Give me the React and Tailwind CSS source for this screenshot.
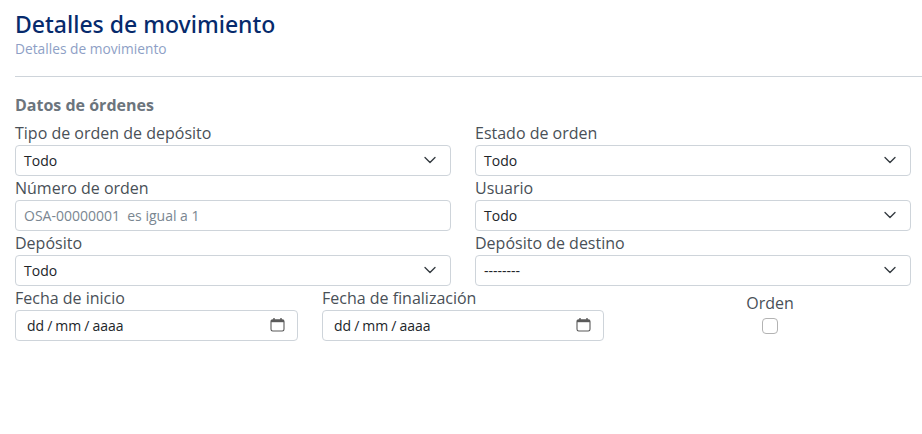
import { ChevronDown } from 'lucide-react'

const boxClass = 'h-[31px] w-full rounded-[4px] border border-[#ced4da] bg-white text-[14px] leading-[29px]'

function Label({ children }) {
  return <div className="h-[24px] text-[16px] leading-[24px] text-[#495057]">{children}</div>
}

function SelectField({ label, value }) {
  return (
    <div>
      <Label>{label}</Label>
      <div className={`${boxClass} flex items-center justify-between pl-2 pr-[10px] text-[#212529]`}>
        <span>{value}</span>
        <ChevronDown size={20} strokeWidth={1.6} className="mb-[1px] text-[#343a40]" />
      </div>
    </div>
  )
}

function DateField({ label }) {
  return (
    <div>
      <Label>{label}</Label>
      <div className={`${boxClass} flex items-center justify-between pl-[11px] pr-[12px] text-[#212529]`}>
        <span className="[word-spacing:-0.6px]">dd / mm / aaaa</span>
        <svg width="15" height="15" viewBox="0 0 15 15" fill="none" className="mb-[3px]">
          <path d="M1 4.5C1 3.4 1.7 2.8 2.7 2.8H12.3C13.3 2.8 14 3.4 14 4.5V12.3C14 13.3 13.3 14 12.3 14H2.7C1.7 14 1 13.3 1 12.3V4.5Z" stroke="#5a5a5a" strokeWidth="1.1" />
          <rect x="1" y="3" width="13" height="2.2" fill="#5a5a5a" />
          <path d="M4 1V3M11 1V3" stroke="#5a5a5a" strokeWidth="1.4" />
        </svg>
      </div>
    </div>
  )
}

export default function App() {
  return (
    <div className="min-h-[434px] bg-white font-['Open_Sans',sans-serif]">
      {/* Header */}
      <div className="pl-[15px] pt-[9px]">
        <h1 className="font-['Noto_Sans',sans-serif] text-[23px] font-medium leading-[30px] text-[#062a6c]">
          Detalles de movimiento
        </h1>
        <p className="mt-[1px] text-[13.75px] font-medium leading-[18px] text-[#8e9fc6]">Detalles de movimiento</p>
      </div>
      <hr className="ml-[15px] mt-[18px] border-t border-[#ced4da]" />

      {/* Form */}
      <div className="pl-[15px] pr-[11px] pt-[16px]">
        <h2 className="text-[16px] font-bold leading-[24px] text-[#6c757d]">Datos de órdenes</h2>
        <div className="mt-[4px] grid grid-cols-2 gap-x-[24px]">
          <SelectField label="Tipo de orden de depósito" value="Todo" />
          <SelectField label="Estado de orden" value="Todo" />
        </div>
        <div className="grid grid-cols-2 gap-x-[24px]">
          <div>
            <Label>Número de orden</Label>
            <input
              className={`${boxClass} block px-2 outline-none placeholder:text-[#7a8691]`}
              placeholder="OSA-00000001  es igual a 1"
            />
          </div>
          <SelectField label="Usuario" value="Todo" />
        </div>
        <div className="grid grid-cols-2 gap-x-[24px]">
          <SelectField label="Depósito" value="Todo" />
          <SelectField label="Depósito de destino" value="--------" />
        </div>
        <div className="flex">
          <div className="w-[283px]">
            <DateField label="Fecha de inicio" />
          </div>
          <div className="ml-[24px] w-[282px]">
            <DateField label="Fecha de finalización" />
          </div>
          <div className="ml-[142px] mt-[5px] flex w-[48px] flex-col items-center">
            <Label>Orden</Label>
            <div className="mt-[3px] h-[16px] w-[16px] rounded-[4px] border border-[#b3b3b3] bg-white" />
          </div>
        </div>
      </div>
    </div>
  )
}
